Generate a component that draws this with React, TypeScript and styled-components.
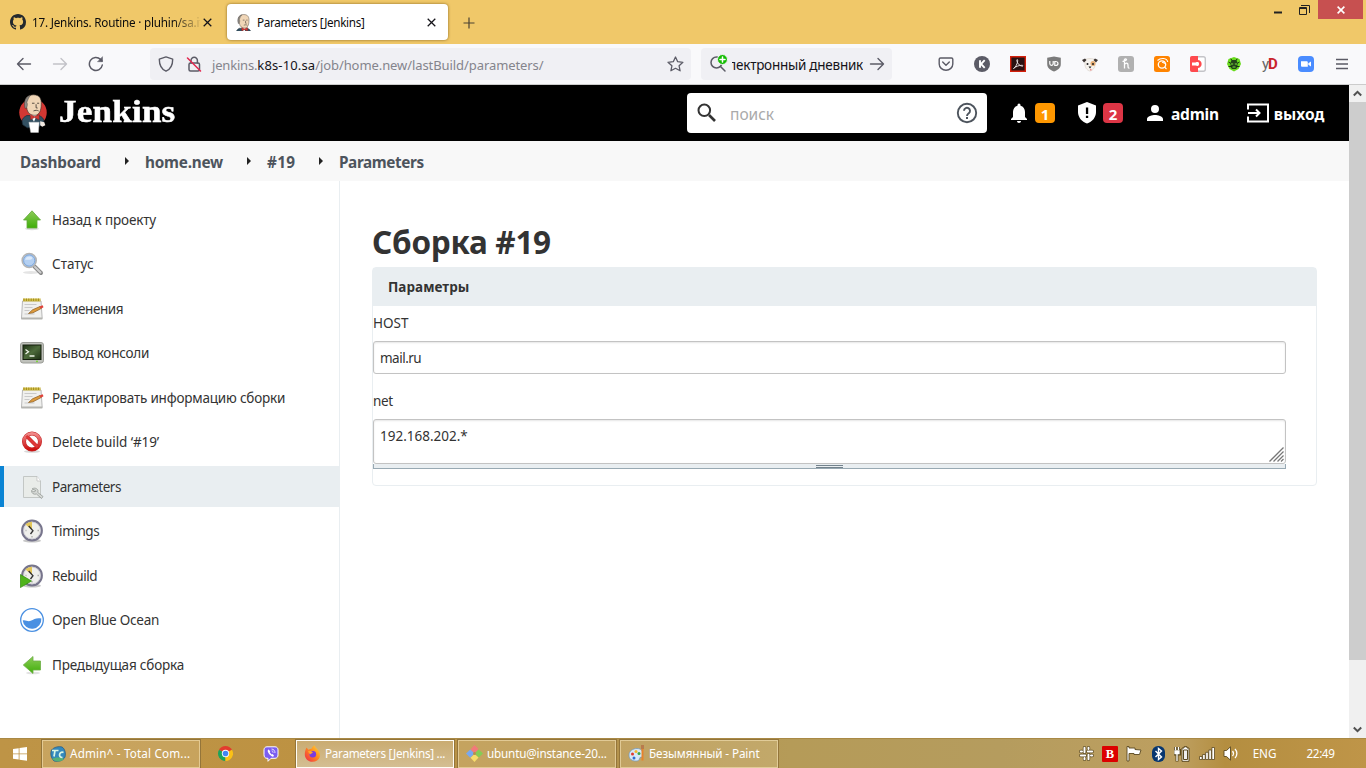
import React from "react";
import styled, { createGlobalStyle, css } from "styled-components";

const Global = createGlobalStyle`
  * { box-sizing: border-box; }
  body { margin: 0; overflow: hidden; background: #fff; color: #333; font-family: "Noto Sans", "Open Sans", sans-serif; }
  svg { display: block; flex: none; }
`;

const Text = styled.span<{ $size?: number; $ls?: number; $color?: string; $bold?: boolean; $family?: string }>`
  flex: none;
  white-space: pre;
  font-size: ${(p) => p.$size ?? 13.5}px;
  letter-spacing: ${(p) => p.$ls ?? 0}px;
  font-weight: ${(p) => (p.$bold ? 700 : 400)};
  ${(p) => p.$color && css`color: ${p.$color};`}
  ${(p) => p.$family && css`font-family: ${p.$family}, sans-serif;`}
`;

const Screen = styled.div`
  width: 1366px;
  height: 768px;
  display: flex;
  flex-direction: column;
`;

/* ---------- browser chrome ---------- */
const TitleBar = styled.div`
  height: 44px;
  background: #f0c869;
  display: flex;
  align-items: flex-start;
  color: #0c0c0d;
`;
const Tab = styled.div<{ $active?: boolean }>`
  width: 221px;
  height: 36px;
  margin-top: 4px;
  padding: 0 ${(p) => (p.$active ? 12 : 9)}px 0 ${(p) => (p.$active ? 9 : 10)}px;
  display: flex;
  align-items: center;
  border-radius: 4px;
  ${(p) => p.$active && css`margin-left: 6px; background: #fff; box-shadow: 0 0 3px rgba(90, 60, 0, 0.7);`}
`;
const TabLabel = styled.div<{ $fade?: boolean }>`
  flex: 1;
  min-width: 0;
  margin-left: 6px;
  margin-right: 3px;
  overflow: hidden;
  line-height: 20px;
  display: flex;
  ${(p) => p.$fade && css`mask-image: linear-gradient(to right, #000 140px, transparent 172px);`}
`;
const NewTab = styled.div`
  padding: 17px 0 0 15px;
`;
const WindowButtons = styled.div`
  margin-left: auto;
  padding-right: 3px;
  display: flex;
`;
const WindowButton = styled.div<{ $close?: boolean }>`
  width: ${(p) => (p.$close ? 45 : 27)}px;
  height: 19px;
  display: flex;
  justify-content: center;
  align-items: center;
  background: ${(p) => (p.$close ? "#c75050" : "transparent")};
`;
const Toolbar = styled.div`
  height: 41px;
  background: #f9f9fb;
  border-bottom: 1px solid #ccc;
  display: flex;
  align-items: center;
`;
const NavButtons = styled.div`
  width: 150px;
  display: flex;
  align-items: center;
  gap: 20px;
  padding-left: 16px;
`;
const UrlBar = styled.div`
  width: 541px;
  height: 32px;
  border-radius: 4px;
  background: #f0f0f4;
  display: flex;
  align-items: center;
  padding: 0 7px 0 8px;
`;
const UrlText = styled.div`
  flex: 1;
  display: flex;
  align-items: center;
  margin-left: -2px;
  padding-top: 1px;
`;
const SearchBox = styled.div`
  width: 191px;
  height: 32px;
  margin-left: 10px;
  border-radius: 4px;
  background: #f0f0f4;
  display: flex;
  align-items: center;
  padding: 0 7px 0 8px;
`;
const SearchClip = styled.div`
  width: 131px;
  margin-left: 1px;
  margin-right: 6px;
  overflow: hidden;
  display: flex;
  justify-content: flex-end;
  padding-top: 1px;
`;
const Extensions = styled.div`
  margin-left: auto;
  padding-right: 16px;
  display: flex;
  align-items: center;
  gap: 20px;
`;
const ExtText = styled.div`
  width: 16px;
  height: 20px;
  display: flex;
  align-items: center;
`;

/* ---------- page ---------- */
const Viewport = styled.div`
  height: 653px;
  display: flex;
`;
const Page = styled.div`
  width: 1349px;
  display: flex;
  flex-direction: column;
`;
const Header = styled.header`
  height: 56px;
  background: #000;
  color: #fff;
  display: flex;
  align-items: center;
  padding-left: 18px;
`;
const Wordmark = styled.div`
  width: 117px;
  height: 36px;
  margin-left: 11px;
  font: 700 31px/34px "Liberation Serif", serif;
  letter-spacing: 0.2px;
  -webkit-text-stroke: 0.5px #fff;
  transform: scaleX(1.13);
  transform-origin: left center;
`;
const HeaderSearch = styled.div`
  width: 300px;
  height: 40px;
  margin-left: 511px;
  padding: 0 8px;
  display: flex;
  align-items: center;
  background: #fff;
  border-radius: 4px;
`;
const Placeholder = styled.div`
  flex: 1;
  margin-left: 11px;
  padding-top: 2px;
  display: flex;
`;
const HeaderItem = styled.div<{ $left: number; $gap: number }>`
  display: flex;
  align-items: center;
  gap: ${(p) => p.$gap}px;
  margin-left: ${(p) => p.$left}px;
`;
const HeaderLabel = styled.div`
  padding-top: 2px;
  line-height: 20px;
  display: flex;
`;
const Badge = styled.div<{ $bg: string }>`
  width: 20px;
  height: 20px;
  border-radius: 4px;
  background: ${(p) => p.$bg};
  color: #fff;
  display: flex;
  justify-content: center;
  font-size: 15px;
  font-weight: 700;
  line-height: 22px;
`;
const Crumbs = styled.nav`
  height: 40px;
  background: #f8f8f8;
  color: #4d545d;
  padding: 1px 0 0 20px;
  display: flex;
  align-items: center;
`;
const Crumb = styled.div<{ $width: number }>`
  width: ${(p) => p.$width}px;
  flex: none;
  display: flex;
`;
const CrumbArrow = styled.div`
  width: 5px;
  margin: -2px 15px 0 0;
  border-left: 4px solid #222;
  border-top: 4px solid transparent;
  border-bottom: 4px solid transparent;
`;
const Columns = styled.div`
  flex: 1;
  display: flex;
`;
const SidePanel = styled.aside`
  width: 340px;
  padding-top: 18px;
  border-right: 1px solid #e9eef1;
  display: flex;
  flex-direction: column;
  gap: 3.5px;
`;
const Task = styled.div<{ $active?: boolean }>`
  height: 41px;
  display: flex;
  align-items: center;
  gap: 8px;
  padding-left: ${(p) => (p.$active ? 16 : 20)}px;
  ${(p) => p.$active && css`background: #e9eef1; border-left: 4px solid #0b84d4;`}
`;
const Main = styled.main`
  flex: 1;
  padding: 40px 32px 0;
`;
const Title = styled.h1`
  margin: 0;
  height: 46px;
  line-height: 42px;
  display: flex;
`;
const Panel = styled.section`
  height: 219px;
  border: 1px solid #e9eef1;
  border-radius: 4px;
`;
const PanelHead = styled.div`
  height: 38px;
  padding: 0 15px 1px;
  background: #e9eef1;
  display: flex;
  align-items: center;
`;
const Field = styled.div<{ $top: number }>`
  padding-top: ${(p) => p.$top}px;
  width: 913px;
`;
const FieldLabel = styled.div`
  height: 20px;
  margin-bottom: 8px;
  line-height: 20px;
  display: flex;
`;
const Box = styled.div<{ $height: number }>`
  height: ${(p) => p.$height}px;
  padding: 6px 1px 1px 6px;
  border: 1px solid #c3c3c3;
  border-radius: 3px;
  box-shadow: inset 0 1px 2px rgba(0, 0, 0, 0.1);
  display: flex;
  justify-content: space-between;
  line-height: 20px;
`;
const Corner = styled.div`
  align-self: flex-end;
`;
const Handle = styled.div`
  height: 5px;
  border: 1px solid #98a9b3;
  border-top: 0;
  background: #e9eef1;
  display: flex;
  justify-content: center;
  padding-top: 1px;
`;
const Grip = styled.div`
  width: 27px;
  height: 3px;
  border: 1px solid #73828c;
  border-width: 1px 0;
`;
const Scrollbar = styled.div`
  width: 17px;
  background: #f0f0f0;
  display: flex;
  flex-direction: column;
  align-items: center;
  padding: 4px 0;
`;
const Thumb = styled.div`
  width: 17px;
  height: 558px;
  margin: 4px 0 auto;
  background: #cdcdcd;
`;

/* ---------- taskbar ---------- */
const Taskbar = styled.footer`
  height: 30px;
  display: flex;
  align-items: center;
  color: #fff;
  border-top: 1px solid #a98945;
  background: linear-gradient(90deg, #be9446 0, #bd9242 330px, #b4924c 600px, #b59b58 790px, #b59c5e 1000px, #bd9f60 1180px, #b48e40 1225px, #bf9548 1366px);
`;
const TaskButton = styled.div<{ $active?: boolean; $left: number }>`
  width: 160px;
  height: 30px;
  margin-left: ${(p) => p.$left}px;
  padding-left: 8px;
  display: flex;
  align-items: center;
  gap: 4px;
  background: ${(p) => (p.$active ? "linear-gradient(#c9ab70, #d5bf94)" : "rgba(222, 196, 146, 0.33)")};
  border: 1px solid #94753a;
  box-shadow: inset 0 0 0 1px ${(p) => (p.$active ? "#fffdf5" : "rgba(255, 240, 200, 0.5)")};
`;
const TaskLabel = styled.div`
  display: flex;
  padding-bottom: 2px;
`;
const Slot = styled.div<{ $width: number; $lift?: number }>`
  width: ${(p) => p.$width}px;
  padding-bottom: ${(p) => p.$lift ?? 0}px;
  display: flex;
  justify-content: center;
`;
const Tray = styled.div`
  margin-left: auto;
  padding-right: 11px;
  display: flex;
  align-items: center;
`;

/* ---------- icons ---------- */
const stroke = { fill: "none", strokeLinecap: "round" as const, strokeLinejoin: "round" as const };

const Github = () => (
  <svg width="16" height="16" viewBox="0 0 16 16">
    <path fill="#24292e" d="M8 0C3.58 0 0 3.58 0 8c0 3.54 2.29 6.53 5.47 7.59.4.07.55-.17.55-.38 0-.19-.01-.82-.01-1.49-2.01.37-2.53-.49-2.69-.94-.09-.23-.48-.94-.82-1.13-.28-.15-.68-.52-.01-.53.63-.01 1.08.58 1.23.82.72 1.21 1.87.87 2.33.66.07-.52.28-.87.51-1.07-1.78-.2-3.64-.89-3.64-3.95 0-.87.31-1.59.82-2.15-.08-.2-.36-1.02.08-2.12 0 0 .67-.21 2.2.82.64-.18 1.32-.27 2-.27s1.36.09 2 .27c1.53-1.04 2.2-.82 2.2-.82.44 1.1.16 1.92.08 2.12.51.56.82 1.27.82 2.15 0 3.07-1.87 3.75-3.65 3.95.29.25.54.73.54 1.48 0 1.07-.01 1.93-.01 2.2 0 .21.15.46.55.38A8.01 8.01 0 0 0 16 8c0-4.42-3.58-8-8-8z" />
  </svg>
);
const Butler = ({ w, h, full }: { w: number; h: number; full?: boolean }) => (
  <svg width={w} height={h} viewBox={full ? "0 0 28 38" : "3 0 22 25"}>
    {full && <circle cx="14" cy="18" r="13.4" fill="#d33833" />}
    <path d="M4 30c-1.500-5 0-7 4-9l12 0c4 2 5 4 4.500 7l-5 4-11 1z" fill="#335061" stroke="#1b2c38" strokeWidth=".7" />
    <path d="M11 20l4 7 3-7z" fill="#fff" />
    <path d="M6.500 12C5 4 9 .8 14.500 .8c6 0 8 4 7.500 9.500 0 6-2 10-6 10.500-5 0-7.500-3-8-7z" fill="#f0d6b7" stroke="#3b332d" strokeWidth=".6" />
    <path d="M6.200 14C4.500 7 7 2 12 1.200 9.500 3 9 6 8 8c1 2 .3 4-.3 6z" fill="#8b8986" stroke="#3b332d" strokeWidth=".4" />
    <path d="M13 9h2.500M18 9h2M17 10v3.500l1.500.2M14.500 16.500c2-.8 3.500-.8 5 0" stroke="#3b332d" strokeWidth=".8" fill="none" />
    <path d="M11.500 20l4 2 4.500-2v5l-4.500-2-4 2z" fill="#d33833" stroke="#81201c" strokeWidth=".4" />
    {full && <><path d="M10 27.500h10l-.7 10h-7.500z" fill="#fff" stroke="#ccc" strokeWidth=".4" /><path d="M21 26.500l4 1 1 3-3 1.500-2-1.500z" fill="#f2e9e2" /></>}
  </svg>
);
const Cross = ({ color = "#15141a", s = 9 }: { color?: string; s?: number }) => (
  <svg width={s} height={s} viewBox="0 0 9 9"><path d="M.7.7l7.600 7.600M8.300.7L.7 8.300" stroke={color} strokeWidth={s === 8 ? 1.8 : 1.25} /></svg>
);
const ArrowH = ({ flip, color = "#5b5b66" }: { flip?: boolean; color?: string }) => (
  <svg width="16" height="16" viewBox="0 0 16 16" {...stroke} stroke={color} strokeWidth="1.400">
    <path d={flip ? "M14.500 8h-13M7 2.500L1.500 8 7 13.500" : "M1.500 8h13M9 2.500L14.500 8 9 13.500"} />
  </svg>
);

const Up = () => (
  <svg width="24" height="24" viewBox="0 0 24 24">
    <defs><linearGradient id="green" x1="0" y1="0" x2="0" y2="1"><stop offset="0" stopColor="#8ccb58" /><stop offset="1" stopColor="#3fae08" /></linearGradient></defs>
    <ellipse cx="12" cy="20.800" rx="7" ry="1.500" fill="#ddd" />
    <path d="M12 2.800L20.500 12H17v8H7v-8H3.500z" fill="url(#green)" stroke="#62a83a" strokeWidth=".8" />
  </svg>
);
const Prev = () => (
  <svg width="24" height="24" viewBox="0 0 24 24">
    <ellipse cx="13" cy="20" rx="7" ry="1.300" fill="#e2e2e2" />
    <path d="M3.300 12L13 3.500V8h7.500v9H13v3.500z" fill="url(#green)" stroke="#6dae45" strokeWidth=".8" />
  </svg>
);
const Magnifier = () => (
  <svg width="24" height="24" viewBox="0 0 24 24">
    <ellipse cx="11" cy="20.500" rx="8" ry="1.500" fill="#e4e4e4" />
    <path d="M14.500 14.500l6.500 6.500" stroke="#888" strokeWidth="4" strokeLinecap="round" />
    <path d="M15 15l5.500 5.500" stroke="#cfcfcf" strokeWidth="2" strokeLinecap="round" />
    <circle cx="9.200" cy="8.500" r="7" fill="#b4d0f2" stroke="#b4b4b4" strokeWidth="1.600" />
    <circle cx="9.200" cy="8.500" r="5.600" fill="none" stroke="#6f9cd4" strokeWidth=".8" />
    <path d="M5 8c1-4 6-4.500 7.500-2C11 9 7 7 5 8z" fill="#dbe9fa" />
  </svg>
);
const Notepad = () => (
  <svg width="24" height="24" viewBox="0 0 24 24">
    <path d="M2.500 4h18.500l1.200 17.500H1.500z" fill="#f0f0ee" stroke="#b0b0b0" strokeWidth=".9" />
    <path d="M1.300 20.500h21v2h-21z" fill="#b4b4b0" />
    <path d="M3 1.500h17.500v3H3z" fill="#d6c34d" />
    <path d="M3.500 2.800h17" stroke="#a08a20" strokeWidth="2.400" strokeDasharray="1 1.400" />
    <path d="M4.500 7.500h12M4.500 10.500h8M4.500 13.500h5M4.500 17h10" stroke="#c9c9c9" />
    <path d="M8.500 16.500l4-3.700L20 9.500l1.200 2L13 15.800z" fill="#dd9a3b" stroke="#8a5a20" strokeWidth=".7" />
    <path d="M19.500 9.500l3.200-1.300.8 2-2.500 1.500z" fill="#e0413a" />
  </svg>
);
const Terminal = () => (
  <svg width="24" height="24" viewBox="0 0 24 24">
    <rect x=".5" y="1.500" width="23" height="20.500" rx="2.500" fill="#bfc1bb" stroke="#9b9d97" />
    <defs><linearGradient id="con" x1="0" y1="0" x2="1" y2="1"><stop offset="0" stopColor="#1f3316" /><stop offset=".5" stopColor="#4d6b3b" /><stop offset="1" stopColor="#1c2f14" /></linearGradient></defs>
    <rect x="3" y="4" width="18" height="14.500" fill="url(#con)" stroke="#16200f" />
    <path d="M5.500 8.500l3 2.200-3 2.200M9.500 15h5" stroke="#eef5e8" strokeWidth="1.300" fill="none" />
    <circle cx="17" cy="20.300" r=".9" fill="#6fdc22" />
  </svg>
);
const Forbidden = () => (
  <svg width="24" height="24" viewBox="0 0 24 24">
    <defs><linearGradient id="red" x1="0" y1="0" x2="0" y2="1"><stop offset="0" stopColor="#f08a8a" /><stop offset="1" stopColor="#cc1010" /></linearGradient></defs>
    <ellipse cx="12" cy="21.500" rx="8" ry="1.300" fill="#d8d8d8" />
    <circle cx="12" cy="11.500" r="8" fill="#fff" stroke="#c22424" strokeWidth="4" />
    <path d="M6.300 5.800l11.400 11.400" stroke="#c22424" strokeWidth="3.600" />
    <circle cx="12" cy="11.500" r="8" fill="none" stroke="url(#red)" strokeWidth="3" />
    <path d="M6.300 5.800l11.400 11.400" stroke="#df3737" strokeWidth="2.600" />
  </svg>
);
const PageTool = () => (
  <svg width="24" height="24" viewBox="0 0 24 24">
    <path d="M3.500 1.500H17L20.500 6v16.500h-17z" fill="#e9ece9" stroke="#c3c7c5" />
    <path d="M17 1.500V6h3.500" fill="#fff" stroke="#bbb" strokeWidth=".7" />
    <path d="M12 14c2-1.500 5-1 6 1.500l-.2 2 5.200 4-1.500 2-5-4.500c-3 .8-5-.7-5-3.500l2.500 1.500 2-1.500z" fill="#d6d9d6" stroke="#969a97" strokeWidth=".8" />
  </svg>
);
const Clock = ({ play }: { play?: boolean }) => (
  <svg width="24" height="24" viewBox="0 0 24 24">
    <ellipse cx="12" cy="21.800" rx="9" ry="1.800" fill="#c8c8c8" />
    <circle cx="12" cy="11.500" r="9.800" fill="#efefec" stroke="#77758c" strokeWidth="2.200" />
    <circle cx="12" cy="11.500" r="8.400" fill="none" stroke="#c9c8d2" strokeWidth=".8" />
    <path d="M12 11L5.500 5.500c2-2 4-2.800 6.500-2.800z" fill="#e3c65a" />
    <path d="M8.700 7l4.300 4.700-2.500 3.300" stroke="#333" strokeWidth="1.300" fill="none" />
    <path d="M19 11.500h-1.500M12 18.500v-1.500M5.500 11.500h1" stroke="#aaa" strokeWidth="1.300" />
    {play && <path d="M.4 10.500L11.500 17 .4 23.600z" fill="#4fb31b" stroke="#2e8a0a" strokeWidth=".7" />}
  </svg>
);
const Ocean = () => (
  <svg width="24" height="24" viewBox="0 0 24 24">
    <circle cx="12" cy="12" r="11.300" fill="#fff" stroke="#4a90e2" strokeWidth="1.300" />
    <path d="M2.700 12.500c3-.8 5 1.500 8 .3 3.500-1.400 5.500-3.300 10.600-2.300a9.300 9.300 0 0 1-18.600 2z" fill="#4a90e2" />
  </svg>
);

const tasks: { label: string; ls: number; icon: React.ReactNode; active?: boolean }[] = [
  { label: "Назад к проекту", ls: -0.14, icon: <Up /> },
  { label: "Статус", ls: 0, icon: <Magnifier /> },
  { label: "Изменения", ls: -0.4, icon: <Notepad /> },
  { label: "Вывод консоли", ls: -0.25, icon: <Terminal /> },
  { label: "Редактировать информацию сборки", ls: -0.2, icon: <Notepad /> },
  { label: "Delete build ‘#19’", ls: -0.1, icon: <Forbidden /> },
  { label: "Parameters", ls: -0.44, icon: <PageTool />, active: true },
  { label: "Timings", ls: -0.42, icon: <Clock /> },
  { label: "Rebuild", ls: -0.38, icon: <Clock play /> },
  { label: "Open Blue Ocean", ls: -0.23, icon: <Ocean /> },
  { label: "Предыдущая сборка", ls: -0.18, icon: <Prev /> },
];

const Chevron = ({ up }: { up?: boolean }) => (
  <svg width="9" height="9" viewBox="0 0 9 9"><path d={up ? "M.8 6.500L4.500 2.800l3.700 3.700" : "M.8 2.500l3.700 3.700 3.700-3.700"} fill="none" stroke="#505050" strokeWidth="2" /></svg>
);

const slackBars = "M5.500 1.800v4.400M9.500 8.800v4.400M1.800 9.500h4.400M8.800 5.500h4.400M9.500 1.800v1.200M5.500 12v1.200M1.800 5.500h1.200M12 9.500h1.200";

export default function App() {
  return (
    <Screen>
      <Global />
      <TitleBar>
        <Tab>
          <Github />
          <TabLabel $fade><Text $size={11.7} $ls={-0.2}>17. Jenkins. Routine · pluhin/sa.it</Text></TabLabel>
          <Cross />
        </Tab>
        <Tab $active>
          <Butler w={15} h={17} />
          <TabLabel><Text $size={11.7} $ls={-0.35}>Parameters [Jenkins]</Text></TabLabel>
          <Cross />
        </Tab>
        <NewTab><svg width="12" height="12" viewBox="0 0 12 12"><path d="M6 .5v11M.5 6h11" stroke="#4a4233" strokeWidth="1.200" /></svg></NewTab>
        <WindowButtons>
          <WindowButton><svg width="8" height="8"><path d="M0 6.500h8" stroke="#222" strokeWidth="2" /></svg></WindowButton>
          <WindowButton><svg width="11" height="10" viewBox="0 0 11 10"><path d="M.5 2.500h7v7h-7zM2 .5h8.500V8M.5 3.500h7" fill="none" stroke="#222" /></svg></WindowButton>
          <WindowButton $close><Cross color="#fff" s={8} /></WindowButton>
        </WindowButtons>
      </TitleBar>

      <Toolbar>
        <NavButtons>
          <ArrowH flip />
          <ArrowH color="#c2c2c8" />
          <svg width="16" height="16" viewBox="0 0 16 16" {...stroke} stroke="#5b5b66" strokeWidth="1.500"><path d="M14.300 9A6.500 6.500 0 1 1 12.500 3.400L14 5" /><path d="M14.500 1v4.700H9.800z" fill="#5b5b66" strokeWidth=".5" /></svg>
        </NavButtons>
        <UrlBar>
          <svg width="16" height="16" viewBox="0 0 16 16" {...stroke} stroke="#5b5b66" strokeWidth="1.400"><path d="M8 .9l6.700 2.300c0 5.500-1.700 9.800-6.700 12-5-2.200-6.700-6.500-6.700-12z" /></svg>
          <Slot $width={40}>
            <svg width="16" height="16" viewBox="0 0 16 16" {...stroke} stroke="#5b5b66" strokeWidth="1.500"><rect x="3" y="7" width="10.500" height="8" rx="1.500" /><path d="M5 7V4.500a3.200 3.200 0 0 1 6.400 0V7" /><path d="M1.500 2l13 13" stroke="#e22850" /></svg>
          </Slot>
          <UrlText>
            <Text $size={13} $ls={-0.18} $color="#84848c">jenkins.</Text>
            <Text $size={13} $ls={0.13} $color="#15141a">k8s-10.sa</Text>
            <Text $size={13} $ls={-0.08} $color="#84848c">/job/home.new/lastBuild/parameters/</Text>
          </UrlText>
          <svg width="17" height="16" viewBox="0 0 17 16" {...stroke} stroke="#5b5b66" strokeWidth="1.300"><path d="M8.500 1l2.200 4.700 5.200.6-3.800 3.500 1 5-4.600-2.500-4.600 2.500 1-5L1 6.300l5.300-.6z" /></svg>
        </UrlBar>
        <SearchBox>
          <svg width="22" height="20" viewBox="0 0 22 20" {...stroke}><circle cx="7.500" cy="8.500" r="5.500" stroke="#5b5b66" strokeWidth="1.500" /><path d="M11.500 12.500l4.500 4.500" stroke="#5b5b66" strokeWidth="1.500" /><circle cx="13.500" cy="5.500" r="5" fill="#12bc00" stroke="#f0f0f4" /><path d="M11 5.500h5M13.500 3v5" stroke="#fff" strokeWidth="1.500" /></svg>
          <SearchClip><Text $ls={-0.25} $color="#15141a">электронный дневник</Text></SearchClip>
          <ArrowH />
        </SearchBox>
        <Extensions>
          <svg width="16" height="16" viewBox="0 0 16 16" {...stroke} stroke="#5b5b66" strokeWidth="1.400"><path d="M2.500 2h11c.8 0 1.300.5 1.300 1.300V8a6.800 6.200 0 0 1-13.600 0V3.300C1.200 2.500 1.700 2 2.500 2zM4.700 6L8 9.300 11.300 6" /></svg>
          <svg width="16" height="16" viewBox="0 0 16 16"><circle cx="8" cy="8" r="8" fill="#5b5b66" /><path d="M6 4.200v7.600M10.700 4.200L7 8l3.700 3.800" stroke="#fff" strokeWidth="1.900" fill="none" /></svg>
          <svg width="16" height="16" viewBox="0 0 16 16"><path fill="#2a1212" stroke="#d4200c" strokeWidth="1.400" d="M.7.7h14.600v14.600H.7z" /><path d="M3.500 12.500c2-1 4-5 4.200-7.500 0-2-1-2-.8 0 .6 3 3 5 5.600 5.200 1 0 .5-1-.8-.9-3 .1-6 1.200-8.200 3.200z" fill="none" stroke="#e6dcdc" /></svg>
          <svg width="16" height="16" viewBox="0 0 16 16"><path d="M8 .5l6.800 1.200V8c0 4-3 6-6.800 7.500C4.200 14 1.200 12 1.200 8V1.700z" fill="#7b7b7b" /><path d="M3.800 5v2.500c0 2.500 3.400 2.500 3.400 0V5M8.800 5.500v4h.7c3.300 0 3.300-4 0-4z" fill="none" stroke="#fff" strokeWidth="1.200" /></svg>
          <svg width="16" height="16" viewBox="0 0 16 16"><path d="M3 4c2-2 8-2 10 0v5c0 3-3 6-5 6S3 12 3 9z" fill="#f6f3ee" stroke="#d8cfc4" strokeWidth=".6" /><path d="M0 4l3-1.500L4.500 4 2 6.500zM16 4l-3-1.500L11.500 4 14 6.500z" fill="#3e3735" /><circle cx="11" cy="7.500" r="2.500" fill="#e5ad74" /><circle cx="5.500" cy="8" r="1" fill="#222" /><circle cx="11" cy="8" r="1" fill="#222" /><path d="M6.500 10.500h3L8 12.500z" fill="#222" /><path d="M8 13h1.500v1.500H8z" fill="#f08b8b" /></svg>
          <svg width="16" height="16" viewBox="0 0 16 16"><rect width="16" height="16" rx="3" fill="#b1b1b1" /><path d="M6.500 3v9.500M6.500 8.500c1.500-2 3.500-1.500 3.500.5 0 2 0 3.500 1.500 3M4.500 5.500C6 5 8 5 8.500 3.800 8 2.500 7 2.700 6.500 3.500" stroke="#fff" strokeWidth="1.300" fill="none" /></svg>
          <svg width="16" height="16" viewBox="0 0 16 16"><rect width="16" height="16" rx="2.500" fill="#ff8400" /><circle cx="8" cy="8.500" r="3.700" fill="none" stroke="#fff" strokeWidth="1.300" /><path d="M10.500 11l2 2M3.500 4.500C5 3 7 2.300 9.500 2.500c2.500.3 4 1.800 4.200 3.500M8 6.500l2-.5.300 2" stroke="#fff" strokeWidth="1.100" fill="none" /></svg>
          <svg width="16" height="16" viewBox="0 0 16 16"><rect x=".7" y=".7" width="14.600" height="14.600" rx="2" fill="#fff" stroke="#c4c4c8" strokeWidth="1.400" /><path d="M2 0h6v16H2a2 2 0 0 1-2-2V2a2 2 0 0 1 2-2z" fill="#fe4a4e" /><path d="M7.500 4c5.500 0 5.500 8 0 8z" fill="#fe4a4e" /><path d="M2 6.500h3.500c2.500-1 3.500-.5 3.500 1.500s-1 2.500-3.500 1.500H2z" fill="#fff" /></svg>
          <svg width="16" height="16" viewBox="0 0 16 16"><path d="M8 1l5.500 2L15 8l-2.500 5L8 15.500 3.500 13 1 8l1.500-5z" fill="#69db1d" /><path d="M5.500 4h5l1 3v4l-1.500 2H6l-1.500-2V7z" fill="#23431a" /><path d="M2.500 6L5 7.500M13.500 6L11 7.500M2.500 10.500h11M4.500 3L6 4M11.500 3L10 4" stroke="#183312" strokeWidth="1" /><path d="M5 8h2.200M8.800 8H11M6.500 11h3" stroke="#7ee83c" strokeWidth="1.200" /></svg>
          <ExtText><Text $size={15} $ls={-1} $color="#666" $family="Roboto">y</Text><Text $size={15} $bold $color="#c9252d" $family="Roboto">D</Text></ExtText>
          <svg width="16" height="16" viewBox="0 0 16 16"><rect width="16" height="16" rx="4" fill="#4a8cff" /><path d="M3 5.300h5.500c.8 0 1.300.5 1.300 1.300v4.200H4.300c-.8 0-1.300-.5-1.300-1.300zM10.300 7.300L13 5.500v5l-2.700-1.800z" fill="#fff" /></svg>
          <svg width="16" height="16" viewBox="0 0 16 16"><path d="M2 3.500h12M2 8h12M2 12.500h12" stroke="#5b5b66" strokeWidth="1.300" /></svg>
        </Extensions>
      </Toolbar>

      <Viewport>
        <Page>
          <Header>
            <Butler w={30} h={39} full />
            <Wordmark>Jenkins</Wordmark>
            <HeaderSearch>
              <svg width="24" height="24" viewBox="0 0 24 24"><circle cx="9.300" cy="9.300" r="5.800" fill="none" stroke="#333" strokeWidth="2" /><path d="M14 14l6 6" stroke="#333" strokeWidth="2.700" /></svg>
              <Placeholder><Text $size={15.5} $ls={0} $color="#aaa">поиск</Text></Placeholder>
              <svg width="24" height="24" viewBox="0 0 24 24"><circle cx="12" cy="12" r="9.200" fill="none" stroke="#4d545d" strokeWidth="1.900" /><path d="M9 9.700a3 3 0 1 1 4.800 2.500c-1.200.9-1.800 1.300-1.800 2.800" fill="none" stroke="#4d545d" strokeWidth="1.900" /><path d="M11 16h2v2h-2z" fill="#4d545d" /></svg>
            </HeaderSearch>
            <HeaderItem $left={20} $gap={4}>
              <svg width="24" height="24" viewBox="0 0 24 24"><path fill="#fff" d="M12 22c1.100 0 2-.9 2-2h-4c0 1.100.9 2 2 2zm6-6v-5c0-3.070-1.640-5.640-4.500-6.320V4a1.500 1.500 0 0 0-3 0v.68C7.630 5.360 6 7.920 6 11v5l-2 2v1h16v-1l-2-2z" /></svg>
              <Badge $bg="#fe9700">1</Badge>
            </HeaderItem>
            <HeaderItem $left={20} $gap={4}>
              <svg width="24" height="24" viewBox="0 0 24 24"><path fill="#fff" d="M12 1L3 4.500V11c0 5.500 3.800 9.700 9 11.500 5.200-1.800 9-6 9-11.500V4.500z" /><path fill="#000" d="M10.900 6.500h2.300v6.500h-2.300zM10.900 14.700h2.300V17h-2.300z" /></svg>
              <Badge $bg="#dc3545">2</Badge>
            </HeaderItem>
            <HeaderItem $left={20} $gap={4}>
              <svg width="24" height="24" viewBox="0 0 24 24"><path fill="#fff" d="M12 12a4 4 0 1 0 0-8 4 4 0 0 0 0 8zm0 2c-2.670 0-8 1.340-8 4v2h16v-2c0-2.660-5.330-4-8-4z" /></svg>
              <HeaderLabel><Text $size={15.5} $ls={-0.22} $bold>admin</Text></HeaderLabel>
            </HeaderItem>
            <HeaderItem $left={27} $gap={4}>
              <svg width="24" height="24" viewBox="0 0 24 24" fill="none" stroke="#fff" strokeWidth="2"><path d="M2 8.500V3.500h20v17H2v-5M2 12h11M10 8.500l3.500 3.500-3.500 3.500" /></svg>
              <HeaderLabel><Text $size={15.5} $ls={0} $bold>выход</Text></HeaderLabel>
            </HeaderItem>
          </Header>

          <Crumbs>
            <Crumb $width={105}><Text $size={15.3} $ls={-0.2} $bold>Dashboard</Text></Crumb>
            <CrumbArrow />
            <Crumb $width={102}><Text $size={15.3} $ls={-0.22} $bold>home.new</Text></Crumb>
            <CrumbArrow />
            <Crumb $width={52}><Text $size={15.3} $ls={0.3} $bold>#19</Text></Crumb>
            <CrumbArrow />
            <Crumb $width={100}><Text $size={15.3} $ls={-0.39} $bold>Parameters</Text></Crumb>
          </Crumbs>

          <Columns>
            <SidePanel>
              {tasks.map((t, i) => (
                <Task key={i} $active={t.active}>
                  {t.icon}
                  <Text $ls={t.ls}>{t.label}</Text>
                </Task>
              ))}
            </SidePanel>
            <Main>
              <Title><Text $size={31.5} $ls={-0.28} $bold>Сборка #19</Text></Title>
              <Panel>
                <PanelHead><Text $ls={0.05} $bold>Параметры</Text></PanelHead>
                <Field $top={7}>
                  <FieldLabel><Text>HOST</Text></FieldLabel>
                  <Box $height={33}><Text $ls={-0.5}>mail.ru</Text></Box>
                </Field>
                <Field $top={17}>
                  <FieldLabel><Text $ls={-0.3}>net</Text></FieldLabel>
                  <Box $height={45}>
                    <Text>192.168.202.*</Text>
                    <Corner><svg width="15" height="15" viewBox="0 0 15 15"><path d="M.5 14.500l14-14M4.500 14.500l10-10M8.500 14.500l6-6M12 14.500l2.500-2.500" stroke="#777" strokeWidth="1.300" /></svg></Corner>
                  </Box>
                  <Handle><Grip /></Handle>
                </Field>
              </Panel>
            </Main>
          </Columns>
        </Page>
        <Scrollbar><Chevron up /><Thumb /><Chevron /></Scrollbar>
      </Viewport>

      <Taskbar>
        <Slot $width={40}>
          <svg width="14" height="14" viewBox="0 0 14 14"><path fill="#fff" d="M0 2l5.700-.8v5.300H0zM6.500 1L14 0v6.500H6.500zM0 7.300h5.700v5.300L0 11.800zM6.500 7.300H14v6.500l-7.500-1z" /></svg>
        </Slot>
        <TaskButton $left={1}>
          <svg width="16" height="16" viewBox="0 0 16 16"><path d="M1.500 4C4 1 9 0 12 1c3 2 4 6 3 10-2 4-7 5-11 4C1 12 0 8 1.500 4z" fill="#3489bd" stroke="#1c5683" strokeWidth=".7" /><path d="M2 13c3-2 9-2 12 0-2 3-9 3.500-12 0z" fill="#54b078" /><path d="M2 4.500h6.500M5 4.500l-1 6M13.500 6.500c-4-2-6 5-1 5" stroke="#d9f6e4" strokeWidth="1.700" fill="none" /></svg>
          <TaskLabel><Text $size={11.7} $ls={0.17}>Admin^ - Total Com...</Text></TaskLabel>
        </TaskButton>
        <Slot $width={48}>
          <svg width="15" height="15" viewBox="0 0 16 16"><path d="M8 8L1.100 4A8 8 0 0 1 14.900 4z" fill="#e33b2e" /><path d="M8 8l-.1 8A8 8 0 0 1 1.100 4z" fill="#1da35a" /><path d="M8 8l6.900-4a8 8 0 0 1-7 12z" fill="#fbc116" /><circle cx="8" cy="8" r="3.900" fill="#fff" /><circle cx="8" cy="8" r="3" fill="#4285f4" /></svg>
        </Slot>
        <Slot $width={44}>
          <svg width="16" height="16" viewBox="0 0 16 16"><path d="M4 .8h8c2 0 3 1.500 3 3v5c0 2-1 3.500-3 3.500H8L5 15.300v-3H4c-2 0-3-1.500-3-3.500v-5c0-1.500 1-3 3-3z" fill="#7b5df0" stroke="#fff" /><path d="M5.500 3.500c-1.500.6-1 4 3.500 7 1.500.6 2.500-.8 1.500-1.600L9.500 8l-1 .5L6.700 6.300l.6-1z" fill="#fff" /><path d="M8.500 3c2.300.2 3.500 1.700 3.500 4M8.700 4.800c1 .2 1.400.9 1.400 1.900" stroke="#fff" fill="none" strokeWidth=".8" /></svg>
        </Slot>
        <TaskButton $active $left={2}>
          <svg width="17" height="17" viewBox="0 0 17 17">
            <defs><linearGradient id="fox" x1="1" y1="0" x2="0" y2="1"><stop offset="0" stopColor="#ffe03a" /><stop offset=".45" stopColor="#ff8a1e" /><stop offset="1" stopColor="#f0254c" /></linearGradient></defs>
            <path d="M2.500 2.500l2 2.200C5.500 4 6.500 3.700 7.500 3.700 8 2.500 9 1 10.500.3c.3 1.500 1.500 2.500 3 4.200 2 2 3 5 2.300 7.500-1 3-3.800 4.800-7.300 4.800C4 16.800.8 13.500.8 9.500c0-3 .7-5 1.700-7z" fill="url(#fox)" />
            <circle cx="8.800" cy="9.300" r="3.300" fill="#7a3be0" /><path d="M4 6.500c2-1 4 0 5 1-1 1-2 1-3 2z" fill="#ffa52b" />
          </svg>
          <TaskLabel><Text $size={11.7} $ls={-0.28}>Parameters [Jenkins] ...</Text></TaskLabel>
        </TaskButton>
        <TaskButton $left={2}>
          <svg width="17" height="17" viewBox="0 0 17 17"><path d="M8.500 0l4 4-4 4.500-4-4z" fill="#f27a7a" /><path d="M4.300 4.500l4.200 4-4.300 4.300L0 8.500z" fill="#79a8f0" /><path d="M12.700 4.500L17 8.500l-4.200 4-4.300-4z" fill="#85cc55" /><path d="M8.500 9l4 3.500-4 4.500-4-4.200z" fill="#f7dd6c" /><circle cx="8.500" cy="8.500" r="1.500" fill="#b58f4d" /></svg>
          <TaskLabel><Text $size={11.7} $ls={-0.18}>ubuntu@instance-20...</Text></TaskLabel>
        </TaskButton>
        <TaskButton $left={2}>
          <svg width="17" height="17" viewBox="0 0 17 17"><path d="M1 10c0-4 4-6.500 8-6.500s6 2.500 6 6c0 3-2 2.500-3 3-1 1 0 3.500-4 3.500S1 14 1 10z" fill="#d7e8f7" stroke="#6b97bd" strokeWidth=".7" /><circle cx="4.500" cy="9" r="1.500" fill="#e0392f" /><circle cx="8" cy="6.500" r="1.500" fill="#f4b92d" /><circle cx="11" cy="8.500" r="1.500" fill="#37a745" /><circle cx="6" cy="13" r="1.500" fill="#2f6fd0" /><path d="M14.500 4v11.500" stroke="#e8832a" strokeWidth="2" /><path d="M13 0h3v4h-3z" fill="#b87b4d" /></svg>
          <TaskLabel><Text $size={11.7} $ls={-0.1}>Безымянный - Paint</Text></TaskLabel>
        </TaskButton>
        <Tray>
          <Slot $width={24}><svg width="15" height="15" viewBox="0 0 15 15" {...stroke}><path d={slackBars} stroke="#5a481f" strokeWidth="3.400" /><path d={slackBars} stroke="#fff" strokeWidth="2" /></svg></Slot>
          <Slot $width={24}><svg width="16" height="16" viewBox="0 0 16 16"><rect width="16" height="16" rx="1" fill="#dc0000" /><text x="8" y="12.300" textAnchor="middle" fontFamily="Liberation Serif" fontWeight="700" fontSize="12.500" fill="#fff">B</text></svg></Slot>
          <Slot $width={24}><svg width="16" height="16" viewBox="0 0 16 16"><path d="M1 .5h2V2h6v1.500l6 .5-1.500 4.500H8V7.500H3V15H1z" fill="#fff" stroke="#5a481f" strokeWidth=".9" /></svg></Slot>
          <Slot $width={24}><svg width="13" height="16" viewBox="0 0 13 16"><rect width="13" height="16" rx="6" fill="#07366f" /><path d="M3.500 5l6 6L6.500 13.500v-11L9.500 5l-6 6" fill="none" stroke="#fff" strokeWidth="1.400" /></svg></Slot>
          <Slot $width={24}><svg width="16" height="16" viewBox="0 0 16 16"><path d="M1.500 1v3M4.500 1v3M.5 4.500h5V8h-5zM3 8v7.500" stroke="#5a481f" strokeWidth="3" fill="none" /><path d="M1.500 1v3M4.500 1v3M1 5h4v2.500H1zM3 8v7" stroke="#fff" strokeWidth="1.300" fill="#fff" /><path d="M8 2h2V.7h3V2h2v13.300H8z" fill="#fff" stroke="#5a481f" /><path d="M9.500 4h4v9.500h-4z" fill="#eee" stroke="#5a481f" /></svg></Slot>
          <Slot $width={25}><svg width="16" height="13" viewBox="0 0 16 13"><path d="M.5 9.500h2.600v3H.5zM3.600 7.500h2.600v5H3.600zM6.700 5.300h2.600v7.200H6.700zM9.800 3h2.600v9.500H9.800zM12.900.5h2.600v12h-2.600z" fill="#fff" stroke="#5a481f" strokeWidth=".8" /></svg></Slot>
          <Slot $width={24}><svg width="17" height="15" viewBox="0 0 17 15"><path d="M1 4.500h2.500L7.500.8v13.400L3.500 10.500H1z" fill="#fff" stroke="#5a481f" strokeWidth=".9" /><path d="M9.500 5c1.200 1.500 1.200 3.500 0 5M12 3c2.500 2.500 2.500 6.500 0 9" fill="none" stroke="#fff" strokeWidth="1.300" /></svg></Slot>
          <Slot $width={43} $lift={2}><Text $size={11.7} $ls={-0.1}>ENG</Text></Slot>
          <Slot $width={69} $lift={2}><Text $size={11.7} $ls={-0.4}>22:49</Text></Slot>
        </Tray>
      </Taskbar>
    </Screen>
  );
}
